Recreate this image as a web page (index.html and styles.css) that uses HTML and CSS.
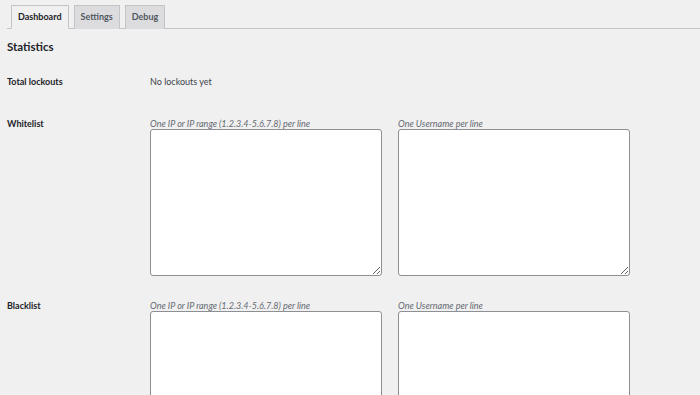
FILE: index.html
```html
<html>
  <head>
    <meta name='viewport' content='width=device-width, initial-scale=1.0'>
    <title>Limit Login Attempts</title>
    <link rel="stylesheet" href="styles.css">
  </head>
  <body>
    <div class="wrap">
      <div class="tabs">
        <a class="tab active">Dashboard</a>
        <a class="tab">Settings</a>
        <a class="tab">Debug</a>
      </div>

      <h2 class="title">Statistics</h2>

      <div class="row row-stat">
        <div class="label">Total lockouts</div>
        <div class="field">No lockouts yet</div>
      </div>

      <div class="row">
        <div class="label">Whitelist</div>
        <div class="field lists">
          <div class="list">
            <div class="hint">One IP or IP range (1.2.3.4-5.6.7.8) per line</div>
            <textarea></textarea>
          </div>
          <div class="list">
            <div class="hint">One Username per line</div>
            <textarea></textarea>
          </div>
        </div>
      </div>

      <div class="row">
        <div class="label">Blacklist</div>
        <div class="field lists">
          <div class="list">
            <div class="hint">One IP or IP range (1.2.3.4-5.6.7.8) per line</div>
            <textarea></textarea>
          </div>
          <div class="list">
            <div class="hint">One Username per line</div>
            <textarea></textarea>
          </div>
        </div>
      </div>
    </div>
  </body>
</html>
```

FILE: styles.css
```css
* {
  margin: 0;
  padding: 0;
  box-sizing: border-box;
}

html, body {
  width: 100%;
  height: 100%;
  background: #f0f0f1;
  overflow: hidden;
}

body {
  font-family: Lato, "Noto Sans", sans-serif;
  font-size: 9px;
  color: #3c434a;
}

.wrap {
  padding: 5px 0 0 7px;
}

.tabs {
  display: flex;
  gap: 5px;
  padding-left: 4px;
  border-bottom: 1px solid #c3c4c7;
}

.tab {
  display: block;
  height: 24px;
  margin-bottom: -1px;
  padding: 0 6px;
  line-height: 22px;
  font-weight: 700;
  font-size: 9px;
  color: #50575e;
  background: #dcdcde;
  border: 1px solid #c3c4c7;
  border-bottom: none;
}

.tab.active {
  color: #1d2327;
  background: #f0f0f1;
  border-bottom: 1px solid #f0f0f1;
}

.title {
  margin-top: 10px;
  font-size: 11.5px;
  font-weight: 700;
  color: #1d2327;
  line-height: 16px;
}

.row {
  display: flex;
  padding: 12px 0;
}

.row-stat {
  padding-top: 21px;
  padding-bottom: 18px;
}

.label {
  width: 143px;
  flex-shrink: 0;
  font-weight: 700;
  color: #1d2327;
  line-height: 11px;
}

.row-stat .label,
.row-stat .field {
  line-height: 12px;
}

.field {
  line-height: 11px;
}

.lists {
  display: flex;
  gap: 16px;
}

.hint {
  font-style: italic;
  color: #646970;
  line-height: 11px;
}

textarea {
  display: block;
  width: 232px;
  height: 147px;
  background: #fff;
  border: 1px solid #8c8f94;
  border-radius: 3px;
}
```
